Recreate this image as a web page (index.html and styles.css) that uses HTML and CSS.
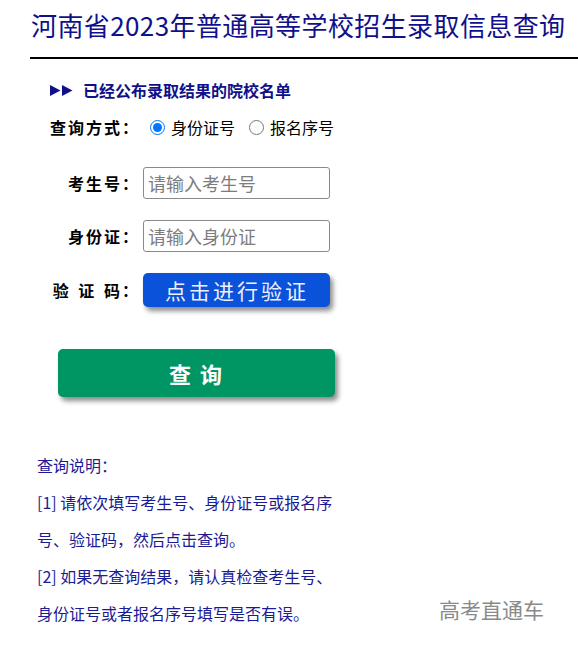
FILE: index.html
```html
<!DOCTYPE html>
<html lang="zh-CN">
<head>
<meta charset="utf-8">
<title>河南省2023年普通高等学校招生录取信息查询</title>
<link rel="stylesheet" href="styles.css">
</head>
<body>
<header class="top">
  <h1 class="title">河南省2023年普通高等学校招生录取信息查询</h1>
</header>
<main class="form">
  <p class="notice"><svg class="arrows" width="24" height="11" viewBox="0 0 24 11"><polygon points="0,0 10.5,5.5 0,11" fill="#10108a"/><polygon points="12,0 22.5,5.5 12,11" fill="#10108a"/></svg><span>已经公布录取结果的院校名单</span></p>
  <div class="mode">
    <span class="mode-label">查询方式：</span>
    <label class="opt"><input type="radio" name="t" checked>身份证号</label>
    <label class="opt"><input type="radio" name="t">报名序号</label>
  </div>
  <div class="field">
    <span class="label">考生号：</span>
    <input class="box" type="text" placeholder="请输入考生号">
  </div>
  <div class="field">
    <span class="label">身份证：</span>
    <input class="box" type="text" placeholder="请输入身份证">
  </div>
  <div class="field">
    <span class="label label-code">验&nbsp;证&nbsp;码：</span>
    <button class="verify" type="button">点击进行验证</button>
  </div>
  <button class="submit" type="button">查&nbsp;询</button>
</main>
<section class="notes">
  <p>查询说明：</p>
  <p>[1] 请依次填写考生号、身份证号或报名序号、验证码，然后点击查询。</p>
  <p>[2] 如果无查询结果，请认真检查考生号、身份证号或者报名序号填写是否有误。</p>
</section>
<div class="watermark">高考直通车</div>
</body>
</html>
```
FILE: styles.css
```css
html, body {
  margin: 0;
  padding: 0;
  background: #fff;
}
body {
  position: relative;
  width: 578px;
  height: 649px;
  overflow: hidden;
  font-family: "Noto Sans CJK SC", "Noto Sans", sans-serif;
}
.top {
  margin-left: 30px;
  padding: 8px 0 15px 1px;
  border-bottom: 2px solid #000;
}
.title {
  margin: 0;
  font-size: 26px;
  line-height: 34px;
  font-weight: 400;
  color: #10108c;
  letter-spacing: 0.4px;
  white-space: nowrap;
}
.form {
  margin: 21px 0 0 50px;
  display: flex;
  flex-direction: column;
  align-items: flex-start;
}
.notice {
  margin: 0;
  display: flex;
  align-items: center;
  height: 20px;
  font-size: 16px;
  font-weight: 700;
  color: #10108a;
}
.arrows {
  margin-right: 9px;
}
.mode {
  margin-top: 17px;
  display: flex;
  align-items: center;
  height: 20px;
  font-size: 16px;
  color: #000;
}
.mode-label {
  width: 90px;
  font-weight: 700;
  letter-spacing: 2px;
  white-space: nowrap;
}
.opt {
  display: flex;
  align-items: center;
  margin-left: 10px;
}
.opt + .opt {
  margin-left: 14px;
}
.opt input {
  width: 15px;
  height: 15px;
  margin: 0 6px 0 0;
}
.field {
  display: flex;
  align-items: center;
  margin-top: 21px;
}
.mode + .field {
  margin-top: 30px;
}
.label {
  width: 90px;
  margin-right: 3px;
  text-align: right;
  font-size: 16px;
  font-weight: 700;
  letter-spacing: 2px;
  color: #000;
  white-space: nowrap;
}
.label-code {
  word-spacing: 2px;
}
.box {
  box-sizing: border-box;
  width: 187px;
  height: 32px;
  padding: 0 4px;
  border: 1px solid #8a8a8a;
  border-radius: 3px;
  font-family: "Noto Sans CJK SC", sans-serif;
  font-size: 18px;
  outline: none;
}
.box::placeholder {
  color: #7d7d7d;
}
.verify {
  box-sizing: border-box;
  width: 187px;
  height: 34px;
  padding: 0 0 0 1px;
  border: none;
  border-radius: 5px;
  background: #0a52d9;
  color: #eef0ff;
  font-family: "Noto Sans CJK SC", sans-serif;
  font-size: 21px;
  letter-spacing: 3px;
  box-shadow: 3px 4px 5px rgba(0, 0, 0, 0.45);
}
.submit {
  margin: 42px 0 0 8px;
  box-sizing: border-box;
  width: 277px;
  height: 48px;
  border: none;
  border-radius: 5px;
  background: #009664;
  color: #fff;
  font-family: "Noto Sans CJK SC", sans-serif;
  font-size: 22px;
  font-weight: 700;
  letter-spacing: 2px;
  box-shadow: 3px 4px 5px rgba(0, 0, 0, 0.45);
}
.notes {
  margin: 50px 0 0 37px;
  width: 302px;
  font-size: 16px;
  line-height: 37px;
  color: #1b1b96;
}
.notes p {
  margin: 0;
}
.watermark {
  position: absolute;
  left: 439px;
  top: 596px;
  font-size: 21px;
  line-height: 26px;
  color: #8a8a8a;
}
```
